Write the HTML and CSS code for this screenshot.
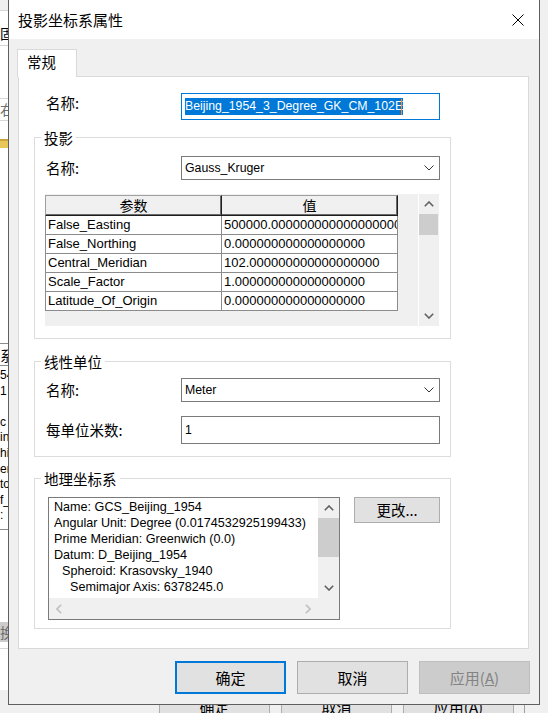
FILE: index.html
```html
<!DOCTYPE html>
<html lang="zh-CN">
<head>
<meta charset="utf-8">
<title>投影坐标系属性</title>
<link rel="stylesheet" href="styles.css">
</head>
<body>
<div class="backdrop">
  <div class="bg-top">
    <div class="strip">
      <div class="s s-a"></div>
      <div class="s s-b cjk">固</div>
      <div class="s s-c"></div>
      <div class="s s-d cjk">右</div>
      <div class="s s-e"><span class="folder"></span></div>
      <div class="s s-f"></div>
      <div class="s s-g cjk">系</div>
      <div class="s s-h">
        <div>54</div><div>1</div><div>&nbsp;</div><div>c</div><div>in</div><div>hi</div><div>er</div><div>to</div><div>f_</div><div>:</div>
      </div>
      <div class="s s-i"></div>
      <div class="s s-j cjk">换(</div>
      <div class="s s-k"></div>
    </div>
  </div>
  <div class="bg-bottom">
    <span class="bg-btn cjk">确定</span>
    <span class="bg-btn cjk">取消</span>
    <span class="bg-btn cjk">应用(<u>A</u>)</span>
    <span class="bg-edge"></span>
  </div>
</div>

<div class="dialog">
  <div class="titlebar">
    <span class="title cjk">投影坐标系属性</span>
    <svg class="close" width="12" height="12" viewBox="0 0 12 12"><path d="M0.5 0.5 L11.5 11.5 M11.5 0.5 L0.5 11.5" stroke="#000" stroke-width="1" fill="none"/></svg>
  </div>
  <div class="body">
    <div class="tabs"><div class="tab cjk">常规</div></div>
    <div class="panel">
      <div class="row row-name">
        <span class="label cjk">名称:</span>
        <div class="input focused"><span class="sel">Beijing_1954_3_Degree_GK_CM_102E</span><span class="caret"></span></div>
      </div>

      <div class="group g-proj">
        <div class="legend cjk">投影</div>
        <div class="row row-sel">
          <span class="label cjk">名称:</span>
          <div class="select"><span>Gauss_Kruger</span><svg class="chev" width="10" height="6" viewBox="0 0 10 6"><path d="M0.5 0.5 L5 5 L9.5 0.5" stroke="#333" stroke-width="1" fill="none"/></svg></div>
        </div>
        <div class="grid">
          <table class="params">
            <colgroup><col class="c1"><col class="c2"></colgroup>
            <thead>
              <tr><th class="cjk">参数</th><th class="cjk">值</th></tr>
            </thead>
            <tbody>
              <tr><td>False_Easting</td><td>500000.000000000000000000</td></tr>
              <tr><td>False_Northing</td><td>0.000000000000000000</td></tr>
              <tr><td>Central_Meridian</td><td>102.000000000000000000</td></tr>
              <tr><td>Scale_Factor</td><td>1.000000000000000000</td></tr>
              <tr><td>Latitude_Of_Origin</td><td>0.000000000000000000</td></tr>
            </tbody>
          </table>
          <div class="vscroll">
            <div class="sbtn"><svg width="10" height="6" viewBox="0 0 10 6"><path d="M0.8 5.2 L5 1 L9.2 5.2" stroke="#606060" stroke-width="1.6" fill="none"/></svg></div>
            <div class="thumb t-grid"></div>
            <div class="sfill"></div>
            <div class="sbtn"><svg width="10" height="6" viewBox="0 0 10 6"><path d="M0.8 0.8 L5 5 L9.2 0.8" stroke="#606060" stroke-width="1.6" fill="none"/></svg></div>
          </div>
        </div>
      </div>

      <div class="group g-unit">
        <div class="legend cjk">线性单位</div>
        <div class="row row-sel2">
          <span class="label cjk">名称:</span>
          <div class="select"><span>Meter</span><svg class="chev" width="10" height="6" viewBox="0 0 10 6"><path d="M0.5 0.5 L5 5 L9.5 0.5" stroke="#333" stroke-width="1" fill="none"/></svg></div>
        </div>
        <div class="row row-txt">
          <span class="label cjk">每单位米数:</span>
          <div class="input plain"><span>1</span></div>
        </div>
      </div>

      <div class="group g-geo">
        <div class="legend cjk">地理坐标系</div>
        <div class="geo-row">
          <div class="memo">
            <div class="memo-text">
              <div>Name: GCS_Beijing_1954</div>
              <div>Angular Unit: Degree (0.0174532925199433)</div>
              <div>Prime Meridian: Greenwich (0.0)</div>
              <div>Datum: D_Beijing_1954</div>
              <div class="ind1">Spheroid: Krasovsky_1940</div>
              <div class="ind2">Semimajor Axis: 6378245.0</div>
            </div>
            <div class="vscroll memo-v">
              <div class="sbtn"><svg width="10" height="6" viewBox="0 0 10 6"><path d="M0.8 5.2 L5 1 L9.2 5.2" stroke="#606060" stroke-width="1.6" fill="none"/></svg></div>
              <div class="thumb t-memo"></div>
              <div class="sfill"></div>
              <div class="sbtn"><svg width="10" height="6" viewBox="0 0 10 6"><path d="M0.8 0.8 L5 5 L9.2 0.8" stroke="#606060" stroke-width="1.6" fill="none"/></svg></div>
            </div>
            <div class="hscroll">
              <div class="hbtn"><svg width="6" height="10" viewBox="0 0 6 10"><path d="M5.2 0.8 L1 5 L5.2 9.2" stroke="#bfbfbf" stroke-width="1.6" fill="none"/></svg></div>
              <div class="hbtn"><svg width="6" height="10" viewBox="0 0 6 10"><path d="M0.8 0.8 L5 5 L0.8 9.2" stroke="#bfbfbf" stroke-width="1.6" fill="none"/></svg></div>
            </div>
            <div class="corner"></div>
          </div>
          <button class="btn btn-change cjk">更改...</button>
        </div>
      </div>
    </div>

    <div class="buttons">
      <button class="btn btn-main default cjk">确定</button>
      <button class="btn btn-main cjk">取消</button>
      <button class="btn btn-main disabled cjk">应用(<u>A</u>)</button>
    </div>
  </div>
</div>
</body>
</html>
```

FILE: styles.css
```css
* { box-sizing: border-box; }
html, body { margin: 0; padding: 0; }
body {
  width: 548px;
  height: 713px;
  overflow: hidden;
  position: relative;
  background: #f0f0f0;
  font-family: "Liberation Sans", Arial, sans-serif;
  color: #000;
}
.cjk { font-family: "Noto Sans CJK SC", "Noto Sans", sans-serif; }

/* ---------- background window ---------- */
.backdrop {
  height: 713px;
  display: flex;
  flex-direction: column;
}
.bg-top { flex: 1; display: flex; }
.strip {
  width: 8px;
  background: #ffffff;
  display: flex;
  flex-direction: column;
  font-size: 12px;
  white-space: nowrap;
}
.s { flex: none; overflow: visible; }
.s-a { height: 11px; background: #f0f0f0; border-bottom: 1px solid #d6d6d6; }
.s-b { height: 35px; padding-top: 10px; line-height: 24px; font-size: 14px; border-bottom: 1px solid #d6d6d6; }
.s-c { height: 53px; border-bottom: 1px solid #d6d6d6; }
.s-d { height: 22px; line-height: 20px; font-size: 14px; color: #6d6d6d; border-bottom: 1px solid #d6d6d6; }
.s-e { height: 40px; padding-top: 18px; }
.folder { display: block; width: 8px; height: 9px; background: #e8c65a; border-top: 2px solid #c9a23a; }
.s-f { height: 183px; border-bottom: 1px solid #8c8c8c; }
.s-g { height: 22px; line-height: 22px; font-size: 14px; border-bottom: 1px solid #8c8c8c; }
.s-h { height: 164px; padding-top: 2px; line-height: 15.6px; border-bottom: 1px solid #8c8c8c; }
.s-i { height: 92px; }
.s-j { height: 20px; line-height: 20px; font-size: 14px; background: #cccccc; color: #6d6d6d; }
.s-k { flex: 1; border-top: 1px solid #d6d6d6; margin-top: 6px; }

.bg-bottom {
  height: 23px;
  flex: none;
  display: flex;
  align-items: flex-start;
  padding-left: 159px;
  gap: 11px;
  overflow: hidden;
  background: #f0f0f0;
}
.bg-btn {
  width: 111px;
  height: 33px;
  flex: none;
  background: #e1e1e1;
  border: 1px solid #adadad;
  font-size: 15px;
  line-height: 31px;
  text-align: center;
}
.bg-edge { width: 1px; height: 23px; background: #a0a0a0; margin-left: -1px; }

/* ---------- dialog ---------- */
.dialog {
  position: absolute;
  left: 8px;
  top: -1px;
  width: 532px;
  height: 706px;
  border: 1px solid #5f5f5f;
  background: #f0f0f0;
  display: flex;
  flex-direction: column;
}
.titlebar {
  height: 39px;
  flex: none;
  background: #ffffff;
  display: flex;
  align-items: center;
  padding: 1px 15px 0 9px;
}
.title { font-size: 15px; line-height: 20px; }
.close { margin-left: auto; display: block; }

.body {
  flex: 1;
  display: flex;
  flex-direction: column;
  padding: 10px 10px 0 9px;
}
.tabs { display: flex; height: 27px; flex: none; }
.tab {
  position: relative;
  z-index: 1;
  margin-left: -1px;
  width: 60px;
  height: 28px;
  background: #ffffff;
  border: 1px solid #d9d9d9;
  border-bottom: none;
  padding-left: 9px;
  font-size: 14.5px;
  line-height: 24px;
}
.panel {
  height: 573px;
  flex: none;
  background: #ffffff;
  border: 1px solid #d9d9d9;
  display: flex;
  flex-direction: column;
}

.row { display: flex; align-items: center; flex: none; }
.label {
  width: 135px;
  flex: none;
  font-size: 14.5px;
  line-height: 20px;
}
.row-name { margin-top: 16px; padding-left: 27px; align-items: flex-start; }

.input {
  width: 259px;
  border: 1px solid #7a7a7a;
  background: #fff;
  display: flex;
  align-items: center;
  font-size: 12.3px;
  padding-left: 3px;
  white-space: nowrap;
}
.input.focused { height: 27px; border-color: #0078d7; }
.input.plain { height: 28px; }
.sel {
  background: #0078d7;
  color: #fff;
  line-height: 17px;
  height: 17px;
}
.caret { width: 1px; height: 16px; background: #ff8728; margin-left: -2px; }

.select {
  width: 259px;
  height: 24px;
  border: 1px solid #7a7a7a;
  background: #fff;
  display: flex;
  align-items: center;
  justify-content: space-between;
  padding: 0 5px 0 3px;
  font-size: 12.3px;
}
.chev { display: block; }

.group {
  flex: none;
  width: 417px;
  margin-left: 15px;
  border: 1px solid #dcdcdc;
  display: flex;
  flex-direction: column;
}
.legend {
  align-self: flex-start;
  margin: -10px 0 0 6px;
  padding: 0 3px;
  background: #fff;
  font-size: 14.5px;
  line-height: 20px;
  flex: none;
}
.group .row { padding-left: 11px; }

.g-proj { margin-top: 17px; height: 202px; }
.row-sel { margin-top: 8px; }
.grid {
  margin: 14px 0 0 10px;
  width: 394px;
  height: 132px;
  background: #f0f0f0;
  display: flex;
  flex: none;
}
.params {
  table-layout: fixed;
  width: 353px;
  border-spacing: 0;
  margin-top: 1px;
  align-self: flex-start;
  font-size: 13px;
}
.c1 { width: 177px; }
.c2 { width: 176px; }
.params th {
  font-weight: normal;
  font-size: 14px;
  line-height: 19px;
  background: #f0f0f0;
  border-top: 1px solid #a0a0a0;
  border-right: 1px solid #1e1e1e;
  border-bottom: 1px solid #1e1e1e;
  box-shadow: inset -1px -1px 0 #6a6a6a;
  padding: 0;
  text-align: center;
}
.params th:first-child { border-left: 1px solid #a0a0a0; }
.params td {
  background: #fff;
  line-height: 18px;
  padding: 0 0 0 2px;
  border-right: 1px solid #8c8c8c;
  border-bottom: 1px solid #8c8c8c;
  white-space: nowrap;
  overflow: hidden;
}
.params td:first-child { border-left: 1px solid #8c8c8c; }

.vscroll {
  margin-left: auto;
  width: 21px;
  display: flex;
  flex-direction: column;
  background: #f0f0f0;
  border-left: 1px solid #ffffff;
}
.sbtn {
  height: 20px;
  flex: none;
  display: flex;
  align-items: center;
  justify-content: center;
}
.sbtn svg, .hbtn svg { display: block; }
.thumb { flex: none; background: #cdcdcd; margin: 0 1px 0 0; }
.t-grid { height: 21px; }
.sfill { flex: 1; }

.g-unit { margin-top: 22px; height: 96px; }
.row-sel2 { margin-top: 6px; }
.row-txt { margin-top: 14px; }

.g-geo { margin-top: 21px; height: 151px; }
.geo-row { display: flex; align-items: flex-start; margin: 8px 0 0 13px; }
.memo {
  width: 292px;
  height: 123px;
  border: 1px solid #7a7a7a;
  background: #fff;
  display: grid;
  grid-template-columns: 269px 21px;
  grid-template-rows: 100px 21px;
}
.memo-text {
  padding: 1px 0 0 5px;
  font-size: 12.6px;
  line-height: 16px;
  white-space: nowrap;
  overflow: hidden;
}
.ind1 { padding-left: 8px; }
.ind2 { padding-left: 16px; }
.memo-v { margin: 0; border-left: none; }
.t-memo { height: 39px; margin: 0; }
.hscroll {
  background: #f0f0f0;
  display: flex;
  justify-content: space-between;
}
.hbtn { width: 20px; display: flex; align-items: center; justify-content: center; }
.corner { background: #f0f0f0; }

.btn {
  font: inherit;
  margin: 0;
  padding: 0;
  background: #e1e1e1;
  border: 1px solid #adadad;
  color: #000;
  text-align: center;
}
.btn-change {
  margin-left: 14px;
  width: 86px;
  height: 26px;
  font-size: 14.5px;
  line-height: 22px;
  font-family: "Noto Sans CJK SC", "Noto Sans", sans-serif;
}

.buttons {
  flex: none;
  display: flex;
  justify-content: flex-end;
  gap: 11px;
  margin: 12px -1px 0 0;
}
.btn-main {
  width: 111px;
  height: 33px;
  font-family: "Noto Sans CJK SC", "Noto Sans", sans-serif;
  font-size: 15px;
  line-height: 29px;
}
.btn-main.default { border: 2px solid #0078d7; }
.btn-main.disabled { background: #cccccc; border-color: #bfbfbf; color: #838383; }
```
